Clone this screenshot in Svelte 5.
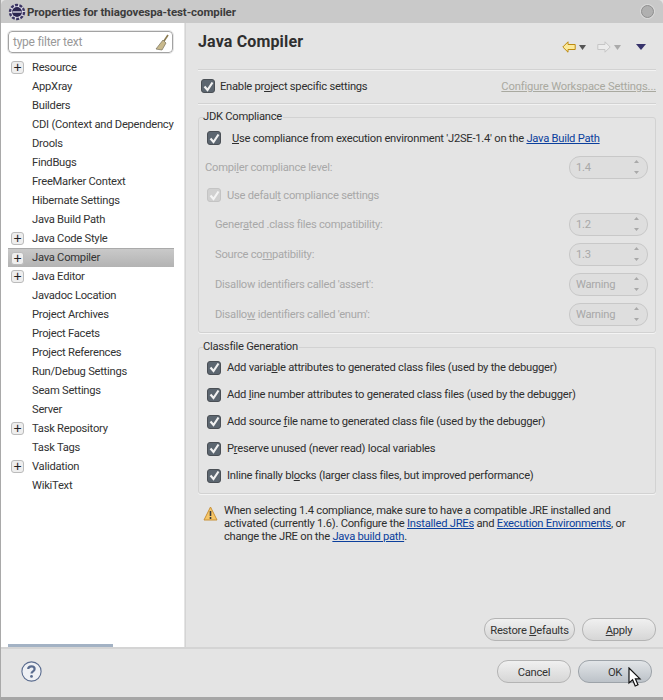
<script>
  const tree = [
    ['Resource', true], ['AppXray'], ['Builders'], ['CDI (Context and Dependency'], ['Drools'], ['FindBugs'],
    ['FreeMarker Context'], ['Hibernate Settings'], ['Java Build Path'], ['Java Code Style', true],
    ['Java Compiler', true, true], ['Java Editor', true], ['Javadoc Location'], ['Project Archives'],
    ['Project Facets'], ['Project References'], ['Run/Debug Settings'], ['Seam Settings'], ['Server'],
    ['Task Repository', true], ['Task Tags'], ['Validation', true], ['WikiText']
  ];
  const classfile = [
    ['Add varia', 'b', 'le attributes to generated class files (used by the debugger)'],
    ['Add ', 'l', 'ine number attributes to generated class files (used by the debugger)'],
    ['Add source ', 'f', 'ile name to generated class file (used by the debugger)'],
    ['P', 'r', 'eserve unused (never read) local variables'],
    ['Inline finally bl', 'o', 'cks (larger class files, but improved performance)']
  ];
  const compat = [
    ['Gener', 'a', 'ted .class files compatibility:', '1.2'],
    ['Source co', 'm', 'patibility:', '1.3'],
    ['Disallow identifiers called ', '', "'assert':", 'Warning'],
    ['Disallo', 'w', " identifiers called 'enum':", 'Warning']
  ];
</script>

{#snippet check(disabled = false)}
  <span class="check" class:disabled>
    <svg width="11" height="11" viewBox="0 0 11 11"><path d="M1.5 5.5 L4.5 9 L9.5 1.5" fill="none" stroke={disabled ? '#f4f4f4' : '#f2f2f2'} stroke-width="2.2" /></svg>
  </span>
{/snippet}

{#snippet spinner(value)}
  <span class="spinner">
    <span>{value}</span>
    <svg width="7" height="18" viewBox="0 0 7 18"><path d="M3.5 2 L6 5 H1 Z M1 13 H6 L3.5 16 Z" fill="#a9a9a9" /></svg>
  </span>
{/snippet}

<div class="window">
  <header class="titlebar">
    <svg class="app-icon" width="18" height="18" viewBox="0 0 18 18">
      <circle cx="9" cy="9" r="7" fill="#e4e2ee" stroke="#3c3565" stroke-width="2.4" stroke-dasharray="3 1.4" />
      <circle cx="9" cy="9" r="5" fill="#2b2550" />
      <path d="M4.5 9 H13.5" stroke="#d8d6e4" stroke-width="1.4" />
    </svg>
    <span class="title">Properties for thiagovespa-test-compiler</span>
    <span class="close"></span>
  </header>

  <div class="body">
    <aside class="sidebar">
      <div class="filter">
        <span>type filter text</span>
        <svg width="14" height="17" viewBox="0 0 14 17">
          <path d="M9 7 L13 1" stroke="#8a7a50" stroke-width="1.6" />
          <path d="M8 6 L11 9 L7 16 L1 15 Z" fill="#c8b98c" stroke="#77705a" stroke-width=".7" />
        </svg>
      </div>
      <ul class="tree">
        {#each tree as [label, expandable, selected]}
          <li class:selected>
            {#if expandable}<span class="twisty">+</span>{/if}
            <span class="label">{label}</span>
          </li>
        {/each}
      </ul>
      <div class="hscroll"></div>
    </aside>

    <main class="page">
      <div class="page-head">
        <h1>Java Compiler</h1>
        <div class="nav">
          <svg width="14" height="12" viewBox="0 0 14 12"><path d="M.8 6 L6 .8 V3.5 H13.2 V8.5 H6 V11.2 Z" fill="#fbe99a" stroke="#bd8a10" /></svg>
          <svg class="tri" width="7" height="5" viewBox="0 0 7 5"><path d="M0 0 H7 L3.5 5 Z" fill="#555" /></svg>
          <svg class="fwd" width="14" height="12" viewBox="0 0 14 12"><path d="M13.2 6 L8 .8 V3.5 H.8 V8.5 H8 V11.2 Z" fill="#ececec" stroke="#c6c6c6" /></svg>
          <svg class="tri" width="7" height="5" viewBox="0 0 7 5"><path d="M0 0 H7 L3.5 5 Z" fill="#aaa" /></svg>
          <svg class="menu" width="10" height="6" viewBox="0 0 10 6"><path d="M0 0 H10 L5 6 Z" fill="#37336b" /></svg>
        </div>
      </div>

      <div class="enable-row">
        {@render check()}
        <span class="enable-text">Enable pr<u>o</u>ject specific settings</span>
        <a class="workspace" href="#top">Configure Workspace Settings...</a>
      </div>

      <fieldset class="jdk">
        <legend>JDK Compliance</legend>
        <div class="row use-ee">
          {@render check()}
          <span><u>U</u>se compliance from execution environment 'J2SE-1.4' on the <a href="#top">Java Build Path</a></span>
        </div>
        <div class="row dim level">
          <span>Compi<u>l</u>er compliance level:</span>
          {@render spinner('1.4')}
        </div>
        <div class="row dim defaults">
          {@render check(true)}
          <span>Use defaul<u>t</u> compliance settings</span>
        </div>
        {#each compat as [a, m, b, value]}
          <div class="row dim compat">
            <span>{a}<u>{m}</u>{b}</span>
            {@render spinner(value)}
          </div>
        {/each}
      </fieldset>

      <fieldset class="classfile">
        <legend>Classfile Generation</legend>
        {#each classfile as [a, m, b]}
          <div class="row cf">
            {@render check()}
            <span>{a}<u>{m}</u>{b}</span>
          </div>
        {/each}
      </fieldset>

      <div class="warning">
        <svg width="15" height="15" viewBox="0 0 15 15">
          <path d="M7.5 1 L14 14 H1 Z" fill="#f6c667" stroke="#c89138" stroke-linejoin="round" />
          <path d="M7.5 5 V10 M7.5 11 V13" stroke="#3a3a3a" stroke-width="1.6" />
        </svg>
        <p>When selecting 1.4 compliance, make sure to have a compatible JRE installed and activated (currently 1.6). Configure the <a href="#top">Installed JREs</a> and <a href="#top">Execution Environments</a>, or change the JRE on the <a href="#top">Java build path</a>.</p>
      </div>

      <div class="page-buttons">
        <button class="restore">Restore <u>D</u>efaults</button>
        <button class="apply"><u>A</u>pply</button>
      </div>
    </main>
  </div>

  <footer class="footer">
    <svg class="help" width="21" height="21" viewBox="0 0 21 21">
      <circle cx="10.5" cy="10.5" r="9.6" fill="#eef0f4" stroke="#5a6c8f" stroke-width="1.1" />
      <path d="M7.2 8 C7.4 4.6 13.6 4.6 13.6 8 C13.6 10.4 10.5 10.2 10.5 12.6" fill="none" stroke="#5a6c8f" stroke-width="2.2" />
      <circle cx="10.5" cy="15.4" r="1.4" fill="#5a6c8f" />
    </svg>
    <div class="footer-buttons">
      <button class="cancel">Cancel</button>
      <button class="ok">OK</button>
    </div>
    <svg class="cursor" width="14" height="21" viewBox="0 0 14 21">
      <path d="M1 1 V16 L4.6 12.8 L7.2 19 L10 17.8 L7.4 11.8 H12 Z" fill="#fff" stroke="#111" stroke-width="1.2" />
    </svg>
  </footer>
</div>

<style>
  :global(body) {
    margin: 0;
    background: #e4e4e4;
  }
  .window {
    position: relative;
    width: 663px;
    height: 700px;
    box-sizing: border-box;
    display: flex;
    flex-direction: column;
    background: #e4e4e4;
    color: #2e2e2e;
    font: 11.2px Roboto, "Noto Sans", sans-serif;
    letter-spacing: -0.25px;
    border-left: 1px solid #a9a9a9;
    border-bottom: 3px solid #a6a6a6;
    overflow: hidden;
  }
  .titlebar {
    height: 23px;
    flex: none;
    display: flex;
    align-items: center;
    padding-left: 7px;
    gap: 1px;
    background: #c9c9c9;
    border-radius: 5px 5px 0 0;
  }
  .title {
    font-size: 11.5px;
    font-weight: 700;
    color: #3c3c3c;
    letter-spacing: -0.08px;
  }
  .close {
    margin-left: auto;
    margin-right: 9px;
    width: 11px;
    height: 11px;
    border-radius: 50%;
    background: #b0b0b0;
    border: 1px solid #8e8e8e;
    box-shadow: 0 0 0 1px #dadada;
  }
  .body {
    flex: 1;
    display: flex;
    min-height: 0;
  }
  .sidebar {
    position: relative;
    width: 183px;
    flex: none;
    background: #fff;
    padding: 8px 0 0 7px;
    box-sizing: border-box;
  }
  .filter {
    width: 165px;
    height: 22px;
    box-sizing: border-box;
    border: 1px solid #a3a3a3;
    border-radius: 4px;
    outline: 1px solid #e6e6e6;
    display: flex;
    align-items: center;
    justify-content: space-between;
    padding: 0 3px 0 4px;
    color: #999;
    font-size: 12px;
  }
  .tree {
    list-style: none;
    margin: 5px 0 0;
    padding: 0;
    width: 166px;
  }
  .tree li {
    position: relative;
    height: 19px;
    line-height: 20px;
    padding-left: 24px;
    white-space: nowrap;
    overflow: hidden;
    color: #333;
  }
  .tree li.selected {
    background: linear-gradient(#c9c9c9, #b3b3b3);
    border-top: 1px solid #aaa;
    box-sizing: border-box;
    line-height: 17px;
  }
  .twisty {
    position: absolute;
    left: 3px;
    top: 3px;
    width: 11px;
    height: 11px;
    border: 1px solid #bbb;
    border-radius: 3px;
    background: #eee;
    color: #222;
    font: 14px/11px "Liberation Sans", sans-serif;
    text-align: center;
    letter-spacing: 0;
  }
  .hscroll {
    position: absolute;
    left: 7px;
    bottom: 0;
    width: 105px;
    height: 3px;
    background: #a3b2c4;
  }
  .page {
    flex: 1;
    min-width: 0;
    margin-left: 1px;
    padding: 0 7px 0 12px;
    display: flex;
    flex-direction: column;
    border-left: 1px solid #d4d4d4;
  }
  .page-head {
    height: 46px;
    flex: none;
    display: flex;
    align-items: center;
    justify-content: space-between;
    border-bottom: 1px solid #d2d2d2;
    box-shadow: 0 1px 0 #f2f2f2;
  }
  h1 {
    margin: 0 0 9px;
    font-size: 16px;
    font-weight: 700;
    color: #2f2f2f;
    letter-spacing: 0.15px;
  }
  .nav {
    display: flex;
    align-items: center;
    margin: 0 10px 0 0;
    position: relative;
    top: 1px;
  }
  .tri { margin-left: 3px; }
  .fwd { margin-left: 11px; }
  .menu { margin-left: 15px; }
  .enable-row {
    height: 32px;
    padding: 0 0 1px 3px;
    flex: none;
    display: flex;
    align-items: center;
    border-bottom: 1px solid #d2d2d2;
    box-shadow: 0 1px 0 #f2f2f2;
  }
  .enable-text { margin-left: 5px; }
  .check {
    width: 14px;
    height: 14px;
    flex: none;
    box-sizing: border-box;
    border-radius: 3px;
    background: #5c6670;
    border: 1px solid #4a4f55;
    display: inline-flex;
    align-items: center;
    justify-content: center;
  }
  .check.disabled {
    background: #d0d0d0;
    border-color: #c4c4c4;
  }
  fieldset {
    margin: 0;
    padding: 0 7px 0 8px;
    border: 1px solid #d2d2d2;
    border-radius: 3px;
    min-width: 0;
    box-shadow: 0 1px 0 #f4f4f4;
  }
  legend {
    padding: 0 1px 0 0;
    margin-left: -4px;
    line-height: 14px;
  }
  .jdk {
    margin-top: 6px;
    height: 223px;
    box-sizing: border-box;
  }
  .classfile {
    margin-top: 7px;
    height: 154px;
    box-sizing: border-box;
  }
  .row {
    display: flex;
    align-items: center;
    white-space: nowrap;
  }
  .use-ee {
    height: 28px;
    gap: 11px;
  }
  .dim {
    color: #a8a8a8;
    justify-content: space-between;
  }
  .level {
    height: 29px;
    box-sizing: border-box;
    padding-top: 1px;
    margin-left: -2px;
  }
  .defaults {
    height: 28px;
    justify-content: flex-start;
    gap: 6px;
  }
  .compat {
    height: 30px;
    padding-left: 8px;
  }
  .spinner {
    width: 79px;
    height: 23px;
    box-sizing: border-box;
    border: 1px solid #c8c8c8;
    border-radius: 11px;
    background: #dedede;
    display: flex;
    align-items: center;
    justify-content: space-between;
    padding: 0 7px 0 6px;
    color: #a8a8a8;
  }
  .cf {
    height: 27px;
    gap: 6px;
  }
  .warning {
    display: flex;
    gap: 6px;
    margin-top: 10px;
    padding-left: 5px;
  }
  .warning svg {
    flex: none;
    margin-top: 2px;
  }
  .warning p {
    margin: 0;
    width: 404px;
    line-height: 13px;
  }
  a {
    color: #0b3f9c;
    text-decoration: underline;
  }
  .enable-row .workspace {
    margin-left: auto;
    color: #a9a9a0;
    letter-spacing: -0.15px;
  }
  .page-buttons {
    margin-top: auto;
    margin-bottom: 6px;
    display: flex;
    justify-content: flex-end;
    gap: 7px;
  }
  button {
    height: 23px;
    padding: 1px 0 0;
    font: inherit;
    letter-spacing: inherit;
    color: #333;
    border: 1px solid #b4b4b4;
    border-radius: 11px;
    background: linear-gradient(#f0f0f0, #d6d6d6);
  }
  .restore { width: 91px; }
  .apply { width: 74px; }
  .cancel, .ok { width: 74px; }
  .ok {
    background: linear-gradient(#e2e5e8, #bcc2c8);
    border-color: #9da3a9;
  }
  .footer {
    height: 50px;
    flex: none;
    display: flex;
    align-items: center;
    justify-content: space-between;
    box-sizing: border-box;
    padding: 0 11px 3px 20px;
    border-top: 2px solid #d4d4d4;
  }
  .footer-buttons {
    display: flex;
    gap: 7px;
  }
  .cursor {
    position: absolute;
    left: 627px;
    top: 667px;
  }
</style>
